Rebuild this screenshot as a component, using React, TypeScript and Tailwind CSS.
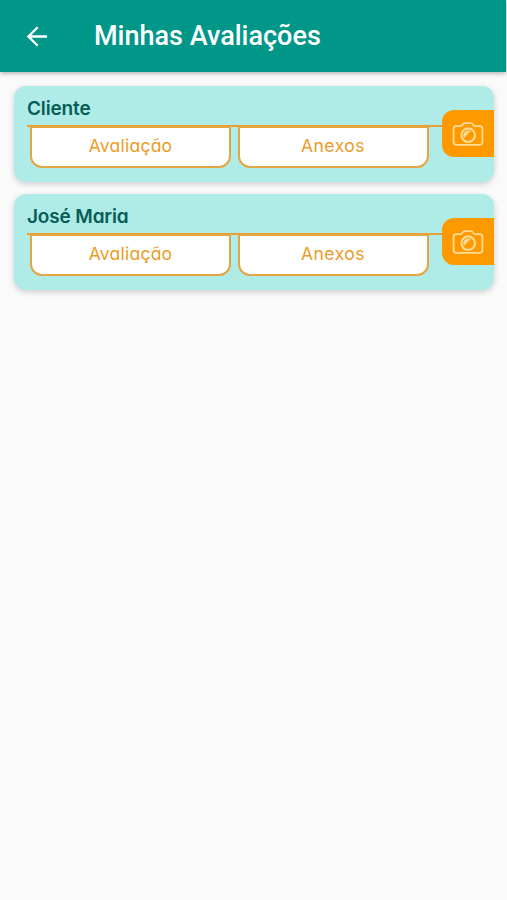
interface Assessment {
  id: number;
  name: string;
}

const assessments: Assessment[] = [
  { id: 1, name: 'Cliente' },
  { id: 2, name: 'José Maria' },
];

function BackIcon() {
  return (
    <svg width="22" height="22" viewBox="0 0 22 22" fill="none" stroke="#fff" strokeWidth="2.3">
      <path d="M21 11.5H2.5M11.7 2.2L2.4 11.5L11.7 20.8" />
    </svg>
  );
}

function CameraIcon() {
  return (
    <svg width="32" height="24" viewBox="0 0 32 24" fill="none" stroke="#ffdc96" strokeWidth="1.8" strokeLinejoin="round" strokeLinecap="round">
      <path d="M4.4 4.2H8.3Q9.9 4.2 10.6 2.6Q11.2 1.2 12.8 1.2H18.8Q20.4 1.2 21 2.6Q21.7 4.2 23.3 4.2H27.6Q30.4 4.2 30.4 7V20Q30.4 22.8 27.6 22.8H4.4Q1.6 22.8 1.6 20V7Q1.6 4.2 4.4 4.2Z" />
      <circle cx="16.2" cy="13.2" r="6.8" strokeWidth="2.1" />
      <path d="M12 15.2A4.6 4.6 0 0 1 18.2 9.2Z" fill="#ffdc96" strokeWidth="0.5" />
    </svg>
  );
}

function AssessmentCard({ name }: { name: string }) {
  return (
    <section className="flex h-24 items-start rounded-xl bg-[#afebe7] pl-[13px] shadow-[0_2px_6px_rgba(0,0,0,0.18)]">
      <div className="flex-1 pt-[10px]">
        <h2 className="h-[29px] text-[19px] leading-[26px] font-semibold tracking-[-0.15px] text-[#075e57]">
          {name}
        </h2>
        <div className="flex gap-[7px] border-t-2 border-[#e9a030] pl-[3px]">
          <button className="-mt-px h-[42px] w-[201px] rounded-b-xl border-2 border-[#e5a541] bg-white pb-[3px] text-[17.5px] leading-none tracking-[0.25px] text-[#eb9c27]">
            Avaliação
          </button>
          <button className="-mt-px h-[42px] w-[191px] rounded-b-xl border-2 border-[#e5a541] bg-white pr-px pb-[3px] text-[17.5px] leading-none tracking-[0.5px] text-[#eb9c27]">
            Anexos
          </button>
        </div>
      </div>
      <button aria-label="Câmera" className="mt-6 flex h-[47px] w-[52px] items-center justify-center rounded-l-xl bg-[#ff9900]">
        <CameraIcon />
      </button>
    </section>
  );
}

export default function App() {
  return (
    <div className="min-h-screen bg-[#fafafa] font-['Inter',sans-serif] [font-feature-settings:'cv11']">
      <header className="flex h-[72px] w-[506px] items-center bg-[#009688] pl-[26px] shadow-[0_1px_5px_rgba(0,0,0,0.35)]">
        <BackIcon />
        <h1 className="ml-[46px] font-['Roboto',sans-serif] text-[27px] leading-none font-medium whitespace-nowrap text-white">
          Minhas Avaliações
        </h1>
      </header>

      <main className="flex flex-col gap-3 pt-[14px] pr-[13px] pl-[14px]">
        {assessments.map((item) => (
          <AssessmentCard key={item.id} name={item.name} />
        ))}
      </main>
    </div>
  );
}
